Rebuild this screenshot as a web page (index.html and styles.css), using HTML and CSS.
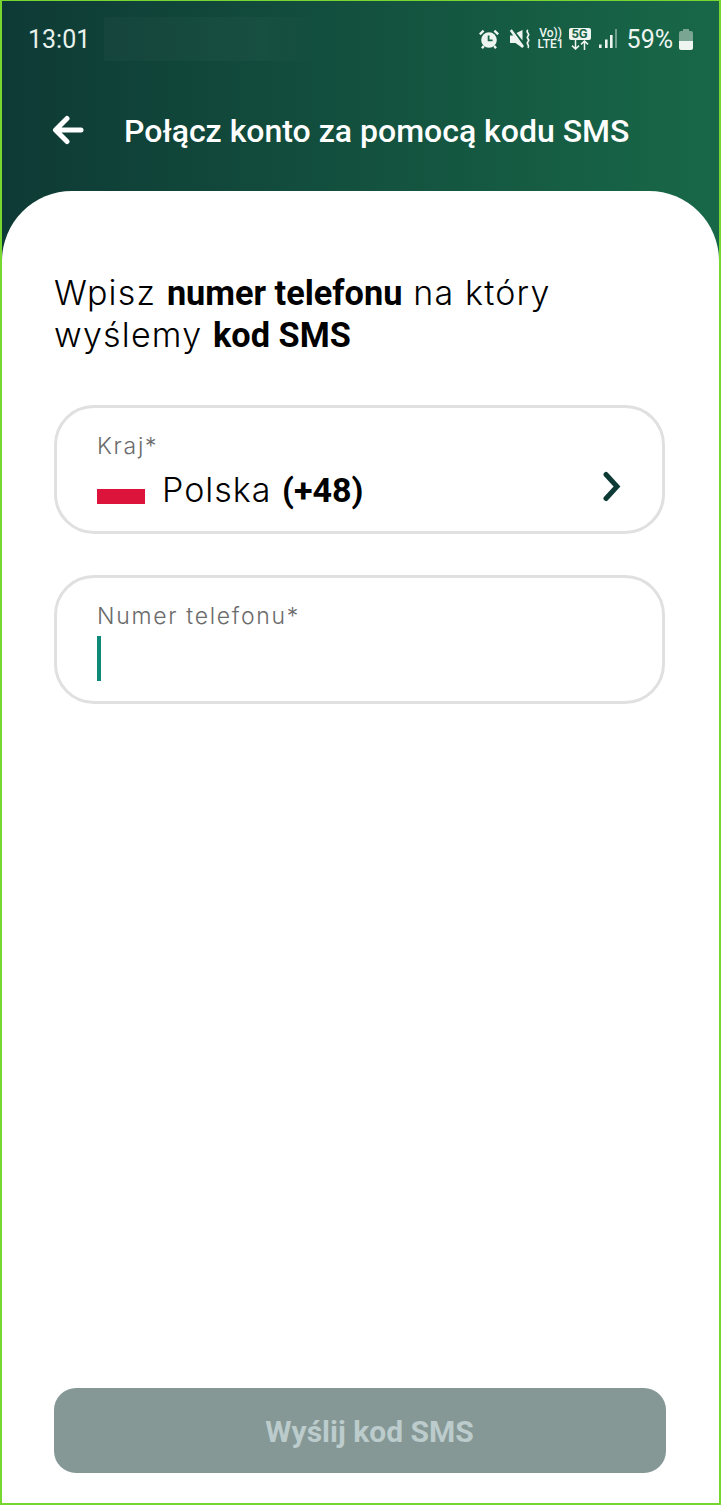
FILE: index.html
```html
<!DOCTYPE html>
<html>
<head>
  <meta charset="UTF-8">
  <title>Połącz konto za pomocą kodu SMS</title>
  <link rel="stylesheet" href="styles.css">
</head>
<body>
  <div class="screen">
    <div class="top">
      <div class="status">
        <span class="time">13:01</span>
        <div class="redacted"></div>
        <div class="status-icons">
          <!-- alarm -->
          <svg class="ico-alarm" width="20" height="20" viewBox="0 0 20 20">
            <circle cx="10" cy="11" r="7.8" fill="#eef5f1"/>
            <path d="M9.6 6.4v5h4" fill="none" stroke="#1a6446" stroke-width="1.8"/>
            <path d="M.8 5.4 4.6 1.6M19.2 5.4 15.4 1.6M4.8 17l-1.8 2.2M15.2 17l1.8 2.2" stroke="#eef5f1" stroke-width="2.4" fill="none"/>
          </svg>
          <!-- mute + vibrate -->
          <svg class="ico-mute" width="22" height="20" viewBox="0 0 22 20">
            <path d="M1 6.5h3.5L6 5.4l7.5 10.4V19L6.5 14H1zM7.5 4 13.5 1v10.4z" fill="#eef5f1"/>
            <path d="M1.8 1 14 18" stroke="#eef5f1" stroke-width="2.6"/>
            <path d="M19 1c-3 2.4 2.6 3.4 0 6s2.6 3.2 0 5.6 2.4 3.4 0 6.4" fill="none" stroke="#eef5f1" stroke-width="1.7"/>
          </svg>
          <div class="net-volte"><span>Vo))</span><span>LTE1</span></div>
          <div class="net-5g">
            <span class="badge-5g">5G</span>
            <svg width="22" height="10" viewBox="0 0 22 10">
              <path d="M6.5 0v9M3 5.6l3.5 3.4 3.5-3.4M15.5 10V1M12 4.4 15.5 1 19 4.4" fill="none" stroke="#eef5f1" stroke-width="1.5"/>
            </svg>
          </div>
          <svg class="ico-signal" width="19" height="20" viewBox="0 0 19 20">
            <rect x="1" y="15.5" width="2.6" height="3.5" fill="#eef5f1"/>
            <rect x="7" y="10.5" width="2.6" height="8.5" fill="#eef5f1"/>
            <rect x="12" y="6" width="2.6" height="13" fill="#eef5f1"/>
            <rect x="17" y="0" width="2" height="19" fill="#6f9f8a"/>
          </svg>
          <span class="battery-pct">59%</span>
          <svg class="ico-battery" width="14" height="21" viewBox="0 0 14 21">
            <path d="M4 0h6v2h2a2 2 0 0 1 2 2v8H0V4a2 2 0 0 1 2-2h2z" fill="#7aa592"/>
            <path d="M0 12h14v7a2 2 0 0 1-2 2H2a2 2 0 0 1-2-2z" fill="#eef5f1"/>
          </svg>
        </div>
      </div>
      <div class="appbar">
        <svg class="back" width="32" height="30" viewBox="0 0 32 30">
          <path d="M29 15H5M15 3.5 3.5 15 15 26.5" fill="none" stroke="#fff" stroke-width="5" stroke-linecap="round" stroke-linejoin="round"/>
        </svg>
        <h1>Połącz konto za pomocą kodu SMS</h1>
      </div>
    </div>

    <div class="sheet">
      <p class="lead">Wpisz <b>numer telefonu</b> na który<br>wyślemy <b>kod SMS</b></p>

      <div class="field">
        <label>Kraj*</label>
        <div class="value">
          <div class="flag"></div>
          <span class="country">Polska <b>(+48)</b></span>
          <svg class="chev" width="22" height="32" viewBox="0 0 22 32">
            <path d="M5 3.5 16 15.5 5 27.5" fill="none" stroke="#0e3a35" stroke-width="5" stroke-linecap="round"/>
          </svg>
        </div>
      </div>

      <div class="field">
        <label>Numer telefonu*</label>
        <div class="value"><div class="caret"></div></div>
      </div>

      <button class="send">Wyślij kod SMS</button>
    </div>
  </div>
</body>
</html>
```

FILE: styles.css
```css
html, body {
  margin: 0;
  padding: 0;
  background: #fff;
}
.screen {
  width: 721px;
  height: 1505px;
  box-sizing: border-box;
  border: solid #77d62f;
  border-width: 1px 2px 2px 2px;
  display: flex;
  flex-direction: column;
  overflow: hidden;
  background: linear-gradient(90deg, #0e3a35 0%, #186848 100%);
  font-family: Roboto, sans-serif;
}

/* header */
.top {
  height: 190px;
  flex: none;
  color: #fff;
}
.status {
  display: flex;
  align-items: center;
  height: 44px;
  margin-top: 16px;
  padding: 0 26px;
}
.time {
  font-size: 25px;
  color: #e8f1ec;
  width: 76px;
}
.redacted {
  width: 220px;
  height: 44px;
  background: linear-gradient(90deg, rgba(255,255,255,.025) 70%, rgba(255,255,255,0));
}
.status-icons {
  display: flex;
  align-items: center;
  margin-left: auto;
  color: #eef5f1;
}
.ico-alarm { margin-right: 10px; }
.ico-mute { margin-right: 7px; }
.net-volte {
  display: flex;
  flex-direction: column;
  align-items: center;
  font-size: 12px;
  line-height: 11.5px;
  font-weight: 500;
  width: 26px;
  margin-right: 5px;
}
.net-5g {
  display: flex;
  flex-direction: column;
  align-items: center;
  width: 22px;
  margin-right: 7px;
}
.badge-5g {
  width: 22px;
  background: #eef5f1;
  color: #1a6446;
  font-size: 13px;
  font-weight: 700;
  line-height: 12px;
  text-align: center;
  border-radius: 2px;
}
.battery-pct {
  font-size: 25px;
  margin: 0 6px 0 10px;
}

.appbar {
  display: flex;
  align-items: center;
  height: 40px;
  margin-top: 50px;
  padding-left: 50px;
}
.back {
  flex: none;
  margin-bottom: 3px;
}
.appbar h1 {
  margin: 0 0 0 40px;
  font-size: 32px;
  font-weight: 500;
  white-space: nowrap;
}

/* white sheet */
.sheet {
  flex: 1;
  background: #fff;
  border-radius: 70px 70px 0 0;
  padding: 81px 53px 30px 52px;
  display: flex;
  flex-direction: column;
}
.lead {
  margin: 0 0 49px;
  font-family: Inter, sans-serif;
  font-weight: 300;
  font-size: 34px;
  letter-spacing: 1.2px;
  line-height: 42px;
  color: #000;
}
.lead b {
  font-family: Roboto, sans-serif;
  font-weight: 700;
  font-size: 34.3px;
  letter-spacing: 0;
}
.field {
  height: 129px;
  box-sizing: border-box;
  border: 3px solid #e0e0e0;
  border-radius: 40px;
  padding: 25px 39px 0 40px;
  margin: 0 1px 41px 0;
}
.field label {
  display: block;
  font-family: Inter, sans-serif;
  font-weight: 300;
  font-size: 23px;
  letter-spacing: 1.7px;
  line-height: 26px;
  color: #6b6b6b;
  margin-bottom: 6px;
}
.value {
  display: flex;
  align-items: center;
  height: 46px;
  font-family: Inter, sans-serif;
  font-weight: 300;
  font-size: 34px;
  letter-spacing: 1px;
  color: #000;
}
.country { padding-top: 2px; }
.value b {
  font-family: Roboto, sans-serif;
  font-weight: 700;
  letter-spacing: 0;
}
.flag {
  width: 48px;
  height: 15px;
  margin: 16px 17px 0 0;
  background: #dc143c;
}
.chev {
  margin-left: auto;
  margin-bottom: 2px;
}
.caret {
  width: 4px;
  height: 45px;
  background: #0f8a7a;
}
.send {
  margin-top: auto;
  height: 85px;
  width: 100%;
  padding: 2px 0 0 19px;
  border: none;
  border-radius: 22px;
  background: #859896;
  color: #bccbcb;
  font-family: Roboto, sans-serif;
  font-size: 30px;
  font-weight: 700;
}
```
